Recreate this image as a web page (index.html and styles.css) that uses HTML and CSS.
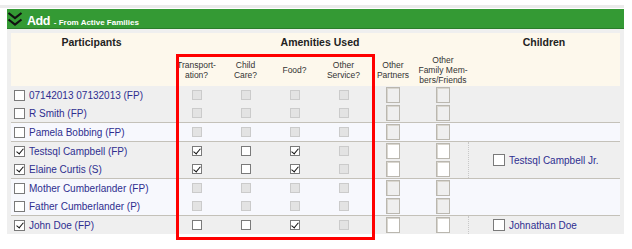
FILE: index.html
```html
<!DOCTYPE html>
<html lang="en">
<head>
    <meta charset="UTF-8">
    <title>Add - From Active Families</title>
    <link rel="stylesheet" href="styles.css">
</head>
<body>
    <div class="top-edge"></div>

    <div class="panel">
        <div class="titlebar">
            <svg class="chev" viewBox="0 0 16 16">
                <polyline points="1.5,2 8,7 14.5,2" />
                <polyline points="1.5,8.5 8,13.5 14.5,8.5" />
            </svg>
            <span class="title">Add</span>
            <span class="subtitle">- From Active Families</span>
        </div>

        <div class="sheet">
            <div class="cols head">
                <div class="main">Participants</div>
                <div class="main span6">Amenities Used</div>
                <div class="main">Children</div>
                <div></div>
                <div class="sub">Transport-<br>ation?</div>
                <div class="sub">Child<br>Care?</div>
                <div class="sub">Food?</div>
                <div class="sub">Other<br>Service?</div>
                <div class="sub">Other<br>Partners</div>
                <div class="sub">Other<br>Family Mem-<br>bers/Friends</div>
                <div></div>
            </div>

            <!-- group 1 -->
            <div class="group">
                <div class="rows">
                    <div class="who"><span class="cb"></span>07142013 07132013 (FP)</div>
                    <div class="am"><span class="cb sm off"></span></div>
                    <div class="am"><span class="cb sm off"></span></div>
                    <div class="am"><span class="cb sm off"></span></div>
                    <div class="am"><span class="cb sm off"></span></div>
                    <div class="ot"><span class="tb"></span></div>
                    <div class="ot"><span class="tb"></span></div>

                    <div class="who"><span class="cb"></span>R Smith (FP)</div>
                    <div class="am"><span class="cb sm off"></span></div>
                    <div class="am"><span class="cb sm off"></span></div>
                    <div class="am"><span class="cb sm off"></span></div>
                    <div class="am"><span class="cb sm off"></span></div>
                    <div class="ot"><span class="tb"></span></div>
                    <div class="ot"><span class="tb"></span></div>
                </div>
                <div class="kids"></div>
            </div>

            <!-- group 2 -->
            <div class="group alt">
                <div class="rows">
                    <div class="who"><span class="cb"></span>Pamela Bobbing (FP)</div>
                    <div class="am"><span class="cb sm off"></span></div>
                    <div class="am"><span class="cb sm off"></span></div>
                    <div class="am"><span class="cb sm off"></span></div>
                    <div class="am"><span class="cb sm off"></span></div>
                    <div class="ot"><span class="tb"></span></div>
                    <div class="ot"><span class="tb"></span></div>
                </div>
                <div class="kids"></div>
            </div>

            <!-- group 3 -->
            <div class="group">
                <div class="rows">
                    <div class="who"><span class="cb on"></span>Testsql Campbell (FP)</div>
                    <div class="am"><span class="cb sm on"></span></div>
                    <div class="am"><span class="cb sm"></span></div>
                    <div class="am"><span class="cb sm on"></span></div>
                    <div class="am"><span class="cb sm off"></span></div>
                    <div class="ot"><span class="tb open"></span></div>
                    <div class="ot"><span class="tb open"></span></div>

                    <div class="who"><span class="cb on"></span>Elaine Curtis (S)</div>
                    <div class="am"><span class="cb sm on"></span></div>
                    <div class="am"><span class="cb sm"></span></div>
                    <div class="am"><span class="cb sm on"></span></div>
                    <div class="am"><span class="cb sm off"></span></div>
                    <div class="ot"><span class="tb open"></span></div>
                    <div class="ot"><span class="tb open"></span></div>
                </div>
                <div class="kids has"><span class="cb"></span>Testsql Campbell Jr.</div>
            </div>

            <!-- group 4 -->
            <div class="group alt">
                <div class="rows">
                    <div class="who"><span class="cb"></span>Mother Cumberlander (FP)</div>
                    <div class="am"><span class="cb sm off"></span></div>
                    <div class="am"><span class="cb sm off"></span></div>
                    <div class="am"><span class="cb sm off"></span></div>
                    <div class="am"><span class="cb sm off"></span></div>
                    <div class="ot"><span class="tb"></span></div>
                    <div class="ot"><span class="tb"></span></div>

                    <div class="who"><span class="cb"></span>Father Cumberlander (P)</div>
                    <div class="am"><span class="cb sm off"></span></div>
                    <div class="am"><span class="cb sm off"></span></div>
                    <div class="am"><span class="cb sm off"></span></div>
                    <div class="am"><span class="cb sm off"></span></div>
                    <div class="ot"><span class="tb"></span></div>
                    <div class="ot"><span class="tb"></span></div>
                </div>
                <div class="kids"></div>
            </div>

            <!-- group 5 -->
            <div class="group">
                <div class="rows">
                    <div class="who"><span class="cb on"></span>John Doe (FP)</div>
                    <div class="am"><span class="cb sm"></span></div>
                    <div class="am"><span class="cb sm"></span></div>
                    <div class="am"><span class="cb sm on"></span></div>
                    <div class="am"><span class="cb sm off"></span></div>
                    <div class="ot"><span class="tb open"></span></div>
                    <div class="ot"><span class="tb open"></span></div>
                </div>
                <div class="kids has"><span class="cb"></span>Johnathan Doe</div>
            </div>
        </div>
    </div>

    <div class="callout"></div>
</body>
</html>
```

FILE: styles.css
```css
body { margin: 0; font-family: "Liberation Sans", Arial, sans-serif; background: #fff; color: #222; }

.top-edge { width: 624px; height: 5px; border-bottom: 3px solid #ebebeb; margin-bottom: 1px; }

.panel { width: 617px; margin-left: 7px; background: #efefef; }

.titlebar { display: flex; align-items: baseline; height: 19px; background: #349a34; border-bottom: 1px solid #2a7d2a; color: #fff; }
.chev { width: 16px; height: 16px; align-self: center; margin-right: 4px; }
.chev polyline { fill: none; stroke: #111; stroke-width: 2.2; }
.title { font-size: 12.5px; font-weight: bold; letter-spacing: -0.5px; line-height: 24px; }
.subtitle { font-size: 8px; font-weight: bold; margin-left: 4px; }

.sheet { padding: 4px 4px 0; }

.cols { display: grid; grid-template-columns: 161px repeat(4, 49px) 50px 50px 152px; }
.head { background: #fdf8ec; grid-template-rows: 18px 35px; }
.head .main { font-size: 10.5px; font-weight: bold; text-align: center; line-height: 18px; }
.head .span6 { grid-column: span 6; }
.head .sub { font-size: 8.5px; line-height: 10px; color: #333; text-align: center; display: flex; align-items: center; justify-content: center; padding-top: 2px; }

.group { display: flex; }
.group + .group { border-top: 1px solid #c4c1b9; }
.group.alt { background: #f7f8fd; }

.rows { display: grid; grid-template-columns: 161px repeat(4, 49px) 50px 50px; grid-auto-rows: 18px; }

.who { display: flex; align-items: center; padding-left: 3px; font-size: 10px; color: #2e2e8f; white-space: nowrap; }
.who .cb { margin-right: 4px; }

.am, .ot { display: flex; align-items: center; justify-content: center; }

.kids { width: 152px; box-sizing: border-box; display: flex; align-items: center; padding-left: 25px; font-size: 10px; color: #2e2e8f; }
.kids.has { border-left: 1px dotted #c8c8c8; padding-left: 24px; }
.kids .cb { margin-right: 4px; width: 12px; height: 12px; }

.cb { width: 11px; height: 11px; box-sizing: border-box; border: 1px solid #7a7a7a; background: #fff; position: relative; flex: none; }
.cb.sm { width: 10px; height: 10px; }
.cb.off { background: #e3e3e3; border-color: #cbcbcb; }
.cb.on::after { content: ""; position: absolute; left: 3px; top: 0; width: 3px; height: 6px; border: solid #111; border-width: 0 1.5px 1.5px 0; transform: rotate(40deg); }
.cb.sm.on::after { left: 2.5px; top: -0.5px; }

.tb { width: 14px; height: 16px; box-sizing: border-box; border: 1px solid #bab7af; box-shadow: inset 1px 1px 0 #d9d6cf; background: #efefef; }
.tb.open { background: #fff; }

.callout { position: absolute; left: 176px; top: 54px; width: 199px; height: 186px; box-sizing: border-box; border: 3px solid #f00; }
```
